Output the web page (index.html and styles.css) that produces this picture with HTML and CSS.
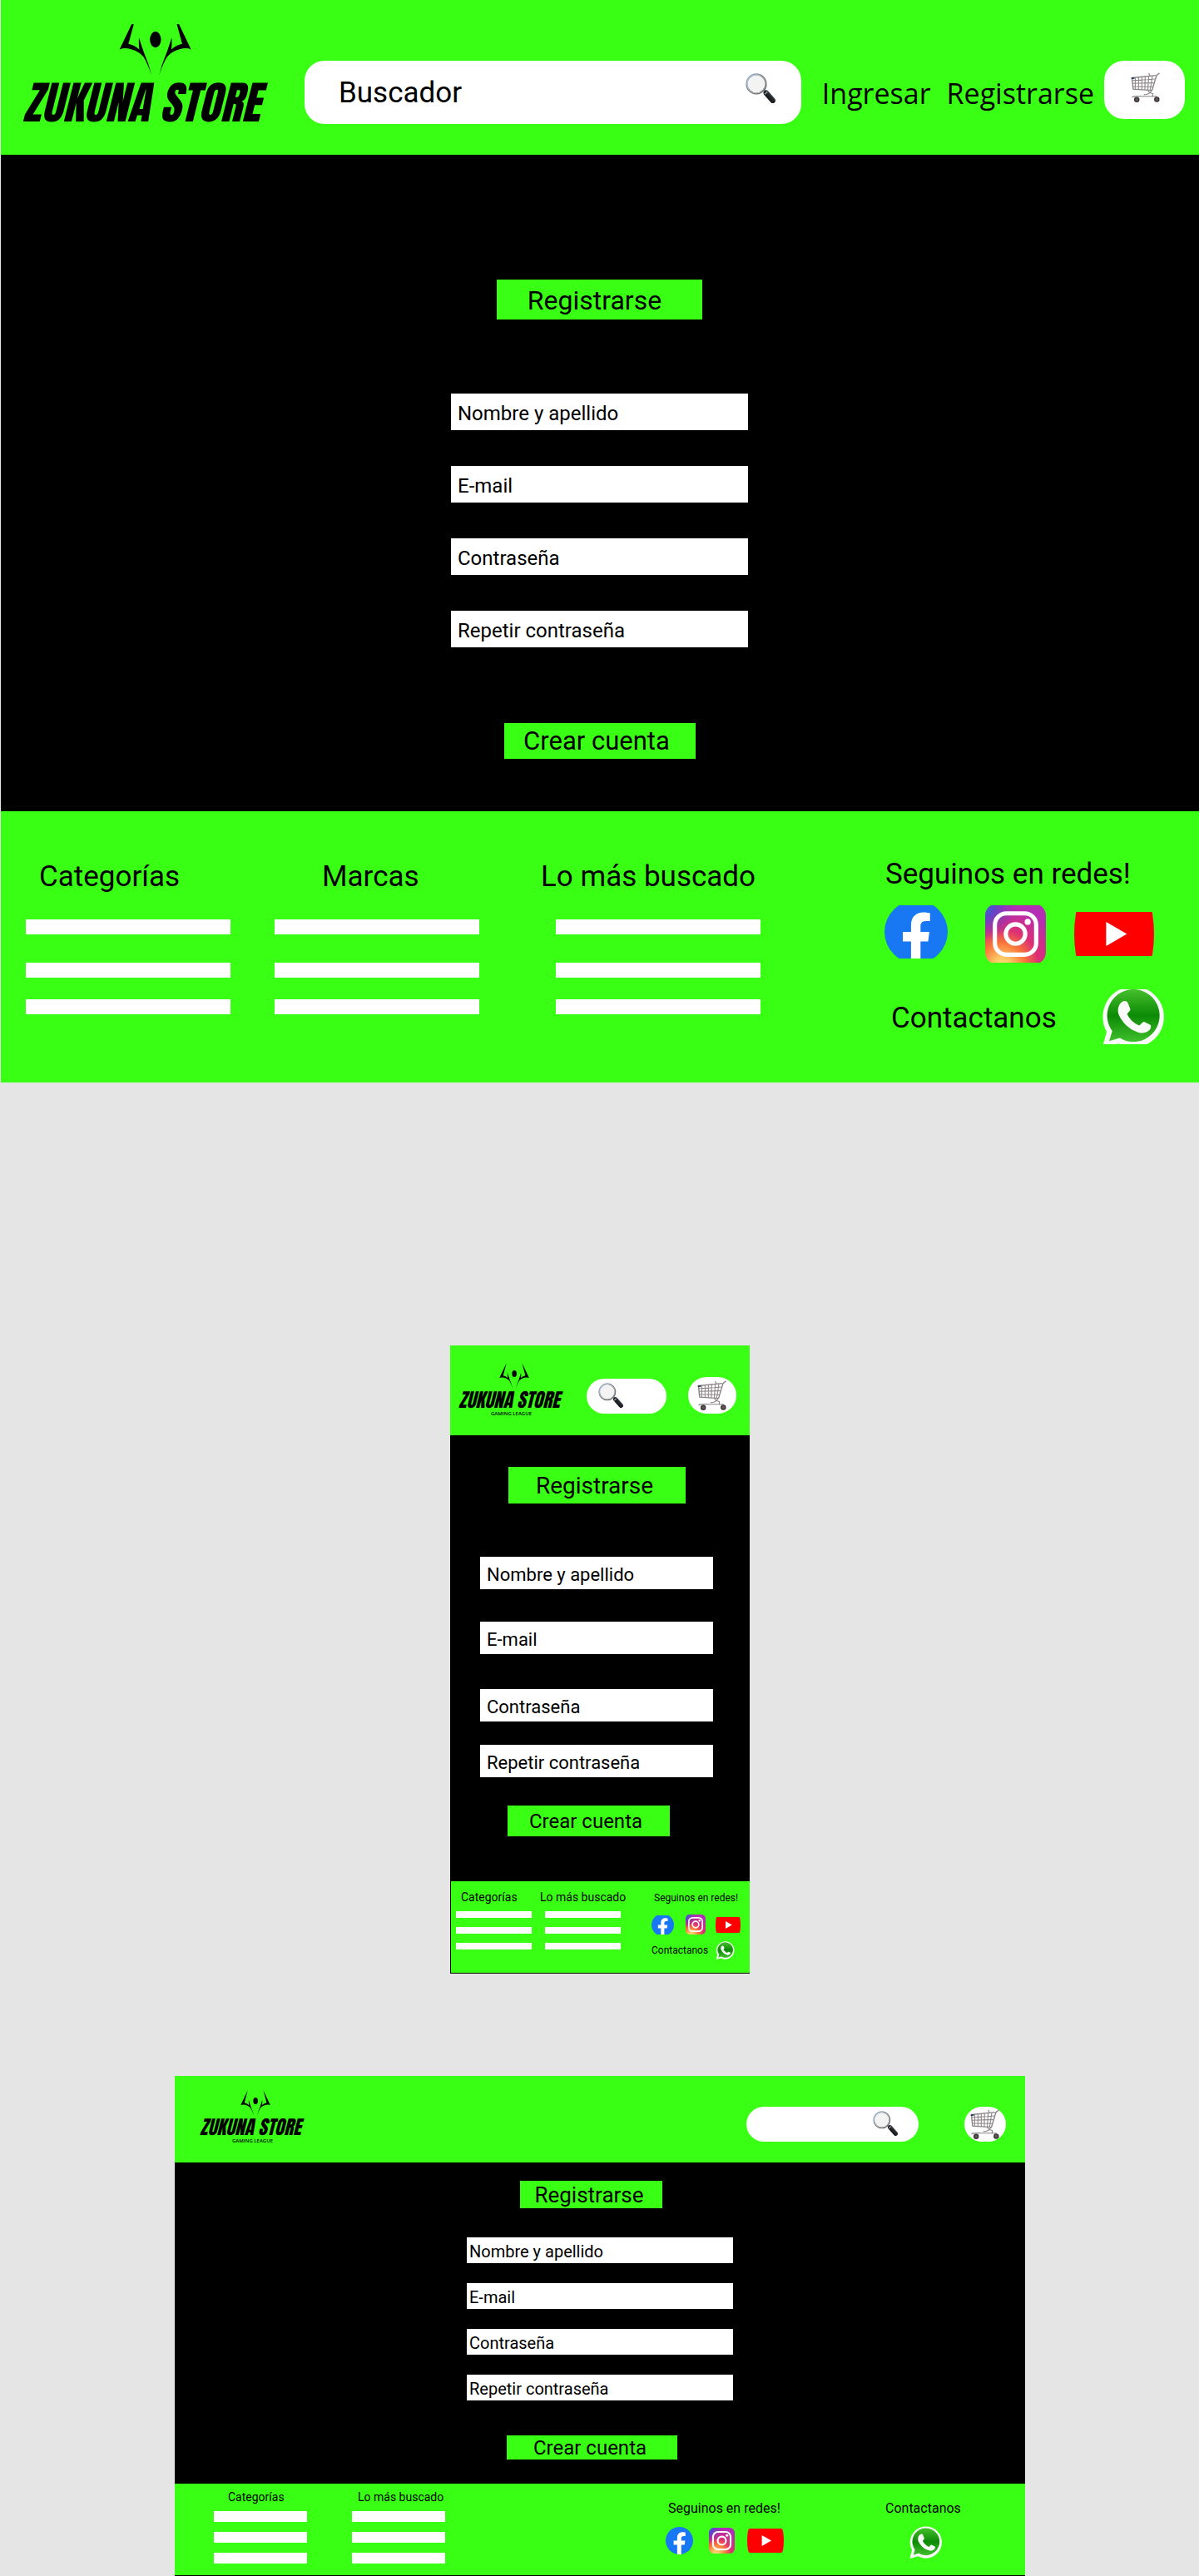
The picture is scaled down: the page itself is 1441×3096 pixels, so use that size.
FILE: index.html
```html
<!DOCTYPE html>
<html lang="es">
<head>
<meta charset="utf-8">
<meta name="viewport" content="width=device-width, initial-scale=1">
<title>Zukuna Store - Registrarse</title>
<link rel="stylesheet" href="styles.css">
</head>
<body>
<svg class="sprite" width="0" height="0" aria-hidden="true">
  <defs>
    <linearGradient id="lens-rim" x1="0" y1="0" x2="1" y2="1">
      <stop offset="0" stop-color="#8db4d8"/><stop offset=".5" stop-color="#77797c"/><stop offset="1" stop-color="#4a4c4f"/>
    </linearGradient>
    <linearGradient id="handle" x1="0" y1="1" x2="1" y2="0">
      <stop offset="0" stop-color="#0c0d0f"/><stop offset=".6" stop-color="#24282c"/><stop offset="1" stop-color="#66717a"/>
    </linearGradient>
    <radialGradient id="ig-warm" cx=".28" cy="1.02" r="1">
      <stop offset="0" stop-color="#ffdd77"/><stop offset=".14" stop-color="#fec564"/><stop offset=".38" stop-color="#f9743a"/><stop offset=".6" stop-color="#dd2f74"/><stop offset="1" stop-color="#b32db5"/>
    </radialGradient>
    <radialGradient id="ig-cool" cx="-.05" cy=".02" r=".6">
      <stop offset="0" stop-color="#3771e0"/><stop offset=".35" stop-color="#5a48c8"/><stop offset="1" stop-color="#8a30c0" stop-opacity="0"/>
    </radialGradient>
    <linearGradient id="wa-green" x1="0" y1="0" x2="0" y2="1">
      <stop offset="0" stop-color="#45bf2c"/><stop offset=".5" stop-color="#0d8a06"/><stop offset="1" stop-color="#3fc02c"/>
    </linearGradient>

    <g id="mark">
      <g id="wing">
        <path d="M491 50 L430 178 Q447 170 472 177 Q500 185 516 204 Q530 226 545 270 Q536 232 518 190 Q509 165 500 135 Q498 155 501 178 Q483 162 462 158 Z"/>
      </g>
      <use href="#wing" transform="matrix(-1 0 0 1 1117 0)"/>
      <ellipse cx="559" cy="142" rx="20" ry="29"/>
    </g>

    <g id="lens">
      <path d="M63 58 L70 65" stroke="#777" stroke-width="6"/>
      <path d="M69 66 L91 91" stroke="url(#handle)" stroke-width="18" stroke-linecap="round"/>
      <path d="M64 70 L73 62" stroke="#9aa3aa" stroke-width="4"/>
      <circle cx="36" cy="36" r="32" fill="#f3f3f3" stroke="url(#lens-rim)" stroke-width="6"/>
      <circle cx="36" cy="36" r="31" fill="none" stroke="#d5d8da" stroke-width="2"/>
    </g>

    <g id="cart" fill="none" stroke="#8b8587">
      <path d="M4 18 L83 10 M4 18 L8 56 L71 60 L86 10 L96 2" stroke-width="4"/>
      <path d="M5 27 L80 22 M6 37 L77 35 M7 47 L74 48 M15 17 V56 M26 16 V57 M37 15 V58 M48 14 L47 59 M60 13 L57 59 M72 12 L65 59" stroke-width="3"/>
      <path d="M60 2 L64 12 M57 60 Q62 70 74 71 L73 82 M70 60 Q62 76 44 74 M4 83 Q10 78 40 80 L86 80 L88 87" stroke-width="3"/>
      <path d="M2 17 H12 V22 H2 Z" fill="#27384a" stroke="none"/>
      <circle cx="20" cy="91" r="7" fill="#655859" stroke="#3d3536" stroke-width="4"/>
      <circle cx="87" cy="90" r="7" fill="#655859" stroke="#3d3536" stroke-width="4"/>
    </g>

    <g id="facebook">
      <circle cx="50" cy="50" r="50" fill="#1877f2"/>
      <path fill="#fff" d="M42 100 V65 H29 V50 H42 V39 C42 26 50 19 62 19 C66 19 70 20 72 20 V33 H65 C59 33 57 37 57 41 V50 H71 L69 65 H57 V100 Z"/>
    </g>
    <g id="instagram">
      <rect width="100" height="100" rx="20" fill="url(#ig-warm)"/>
      <rect width="100" height="100" rx="20" fill="url(#ig-cool)"/>
      <rect x="16" y="16" width="68" height="68" rx="19" fill="none" stroke="#fff" stroke-width="7"/>
      <circle cx="50" cy="50" r="16" fill="none" stroke="#fff" stroke-width="7"/>
      <circle cx="70" cy="30" r="5" fill="#fff"/>
    </g>
    <g id="youtube">
      <path fill="#f00" d="M10 1 Q50 -1 90 1 Q97 2 98 10 Q102 35 98 60 Q97 68 90 69 Q50 71 10 69 Q3 68 2 60 Q-2 35 2 10 Q3 2 10 1 Z"/>
      <path fill="#fff" d="M40 20 L66 35 L40 50 Z"/>
    </g>
    <g id="whatsapp">
      <path fill="#fafafa" d="M1 100 L8 74 A49 49 0 1 1 27 93 Z"/>
      <path fill="url(#wa-green)" d="M12 89 L17 73 A42 42 0 1 1 29 84 Z"/>
      <path fill="#fafafa" d="M35 25 C38 24 41 25 42 28 L46 38 C46 41 41 44 41 46 C45 54 51 60 60 64 C62 64 65 58 68 58 L78 63 C80 65 79 69 76 72 C70 77 63 77 56 74 C43 69 34 60 28 48 C24 39 27 28 35 25 Z"/>
    </g>
  </defs>
</svg>

<section class="frame desktop">
  <header class="top">
    <a class="brand" href="#">
      <svg class="brand-mark" viewBox="428 48 260 224" preserveAspectRatio="xMidYMax slice" aria-hidden="true"><use href="#mark"/></svg>
      <span class="brand-name">ZUKUNA STORE</span>
    </a>
    <div class="tools">
      <form class="search" role="search">
        <input type="search" placeholder="Buscador" aria-label="Buscador">
        <button type="button" aria-label="Buscar"><svg class="lens" viewBox="0 0 100 100" aria-hidden="true"><use href="#lens"/></svg></button>
      </form>
      <nav class="account">
        <a href="#">Ingresar</a>
        <a href="#">Registrarse</a>
      </nav>
      <button class="cart" type="button" aria-label="Carrito"><svg viewBox="0 0 100 100" aria-hidden="true"><use href="#cart"/></svg></button>
    </div>
  </header>
  <form class="signup">
    <h1 class="title">Registrarse</h1>
    <div class="fields">
      <input type="text" placeholder="Nombre y apellido" aria-label="Nombre y apellido">
      <input type="email" placeholder="E-mail" aria-label="E-mail">
      <input type="password" placeholder="Contraseña" aria-label="Contraseña">
      <input type="password" placeholder="Repetir contraseña" aria-label="Repetir contraseña">
    </div>
    <button class="submit" type="button">Crear cuenta</button>
  </form>
  <footer class="bottom">
    <section class="links categories"><h2>Categorías</h2><ul><li></li><li></li><li></li></ul></section>
    <section class="links brands"><h2>Marcas</h2><ul><li></li><li></li><li></li></ul></section>
    <section class="links popular"><h2>Lo más buscado</h2><ul><li></li><li></li><li></li></ul></section>
    <div class="reach">
      <section class="social">
        <h2>Seguinos en redes!</h2>
        <div class="networks">
          <a class="fb" href="#" aria-label="Facebook"><svg viewBox="0 0 100 100" preserveAspectRatio="xMidYMid slice" aria-hidden="true"><use href="#facebook"/></svg></a>
          <a class="ig" href="#" aria-label="Instagram"><svg viewBox="0 0 100 100" preserveAspectRatio="xMidYMid slice" aria-hidden="true"><use href="#instagram"/></svg></a>
          <a class="yt" href="#" aria-label="YouTube"><svg viewBox="0 0 100 70" preserveAspectRatio="xMidYMid slice" aria-hidden="true"><use href="#youtube"/></svg></a>
        </div>
      </section>
      <section class="contact">
        <h2>Contactanos</h2>
        <a class="wa" href="#" aria-label="WhatsApp"><svg viewBox="0 0 100 100" preserveAspectRatio="xMidYMid slice" aria-hidden="true"><use href="#whatsapp"/></svg></a>
      </section>
    </div>
  </footer>
</section>

<section class="frame mobile">
  <header class="top">
    <a class="brand" href="#">
      <svg class="brand-mark" viewBox="428 48 260 224" preserveAspectRatio="xMidYMax slice" aria-hidden="true"><use href="#mark"/></svg>
      <span class="brand-name">ZUKUNA STORE</span>
      <span class="brand-tag">GAMING LEAGUE</span>
    </a>
    <div class="tools">
      <form class="search" role="search">
        <button type="button" aria-label="Buscar"><svg class="lens" viewBox="0 0 100 100" aria-hidden="true"><use href="#lens"/></svg></button>
        <input type="search" aria-label="Buscador">
      </form>
      <button class="cart" type="button" aria-label="Carrito"><svg viewBox="0 0 100 100" aria-hidden="true"><use href="#cart"/></svg></button>
    </div>
  </header>
  <form class="signup">
    <h2 class="title">Registrarse</h2>
    <div class="fields">
      <input type="text" placeholder="Nombre y apellido" aria-label="Nombre y apellido">
      <input type="email" placeholder="E-mail" aria-label="E-mail">
      <input type="password" placeholder="Contraseña" aria-label="Contraseña">
      <input type="password" placeholder="Repetir contraseña" aria-label="Repetir contraseña">
    </div>
    <button class="submit" type="button">Crear cuenta</button>
  </form>
  <footer class="bottom">
    <section class="links categories"><h2>Categorías</h2><ul><li></li><li></li><li></li></ul></section>
    <section class="links popular"><h2>Lo más buscado</h2><ul><li></li><li></li><li></li></ul></section>
    <div class="reach">
      <section class="social">
        <h2>Seguinos en redes!</h2>
        <div class="networks">
          <a class="fb" href="#" aria-label="Facebook"><svg viewBox="0 0 100 100" preserveAspectRatio="xMidYMid slice" aria-hidden="true"><use href="#facebook"/></svg></a>
          <a class="ig" href="#" aria-label="Instagram"><svg viewBox="0 0 100 100" preserveAspectRatio="xMidYMid slice" aria-hidden="true"><use href="#instagram"/></svg></a>
          <a class="yt" href="#" aria-label="YouTube"><svg viewBox="0 0 100 70" preserveAspectRatio="xMidYMid slice" aria-hidden="true"><use href="#youtube"/></svg></a>
        </div>
      </section>
      <section class="contact">
        <h2>Contactanos</h2>
        <a class="wa" href="#" aria-label="WhatsApp"><svg viewBox="0 0 100 100" preserveAspectRatio="xMidYMid meet" aria-hidden="true"><use href="#whatsapp"/></svg></a>
      </section>
    </div>
  </footer>
</section>

<section class="frame landscape">
  <header class="top">
    <a class="brand" href="#">
      <svg class="brand-mark" viewBox="428 48 260 224" preserveAspectRatio="xMidYMax slice" aria-hidden="true"><use href="#mark"/></svg>
      <span class="brand-name">ZUKUNA STORE</span>
      <span class="brand-tag">GAMING LEAGUE</span>
    </a>
    <div class="tools">
      <form class="search" role="search">
        <input type="search" aria-label="Buscador">
        <button type="button" aria-label="Buscar"><svg class="lens" viewBox="0 0 100 100" aria-hidden="true"><use href="#lens"/></svg></button>
      </form>
      <button class="cart" type="button" aria-label="Carrito"><svg viewBox="0 0 100 100" aria-hidden="true"><use href="#cart"/></svg></button>
    </div>
  </header>
  <form class="signup">
    <h2 class="title">Registrarse</h2>
    <div class="fields">
      <input type="text" placeholder="Nombre y apellido" aria-label="Nombre y apellido">
      <input type="email" placeholder="E-mail" aria-label="E-mail">
      <input type="password" placeholder="Contraseña" aria-label="Contraseña">
      <input type="password" placeholder="Repetir contraseña" aria-label="Repetir contraseña">
    </div>
    <button class="submit" type="button">Crear cuenta</button>
  </form>
  <footer class="bottom">
    <section class="links categories"><h2>Categorías</h2><ul><li></li><li></li><li></li></ul></section>
    <section class="links popular"><h2>Lo más buscado</h2><ul><li></li><li></li><li></li></ul></section>
    <div class="reach">
      <section class="social">
        <h2>Seguinos en redes!</h2>
        <div class="networks">
          <a class="fb" href="#" aria-label="Facebook"><svg viewBox="0 0 100 100" preserveAspectRatio="xMidYMid meet" aria-hidden="true"><use href="#facebook"/></svg></a>
          <a class="ig" href="#" aria-label="Instagram"><svg viewBox="0 0 100 100" preserveAspectRatio="xMidYMid slice" aria-hidden="true"><use href="#instagram"/></svg></a>
          <a class="yt" href="#" aria-label="YouTube"><svg viewBox="0 0 100 70" preserveAspectRatio="xMidYMid slice" aria-hidden="true"><use href="#youtube"/></svg></a>
        </div>
      </section>
      <section class="contact">
        <h2>Contactanos</h2>
        <a class="wa" href="#" aria-label="WhatsApp"><svg viewBox="0 0 100 100" preserveAspectRatio="xMidYMid meet" aria-hidden="true"><use href="#whatsapp"/></svg></a>
      </section>
    </div>
  </footer>
</section>
</body>
</html>
```

FILE: styles.css
```css
:root {
  --green: #39ff14;
  --canvas: #e5e5e5;
}

* { box-sizing: border-box; }

body {
  margin: 0;
  padding-left: 1px;
  background: var(--canvas);
  color: #000;
  font-family: Roboto, "Liberation Sans", sans-serif;
}

h1, h2 { margin: 0; font-weight: 400; }
ul { margin: 0; padding: 0; list-style: none; }
a { color: inherit; text-decoration: none; }
svg { display: block; }
button, input { margin: 0; border: 0; padding: 0; border-radius: 0; font: inherit; color: inherit; }
button { background: none; cursor: pointer; }
input { min-width: 0; background: none; outline: 0; appearance: none; }
input::placeholder { color: #000; opacity: 1; }
.sprite { position: absolute; }

/* Shared parts */
.frame { margin: 0 auto; background: #000; }

.top { display: flex; align-items: flex-start; background: var(--green); }
.brand { display: flex; flex-direction: column; flex: none; }
.brand-name {
  font-family: Anton, "Roboto Condensed", "Liberation Sans Narrow", "Liberation Sans", sans-serif;
  font-weight: 400;
  font-style: italic;
  white-space: nowrap;
}
.brand-tag { font-family: "Open Sans", sans-serif; font-weight: 600; font-size: 6px; line-height: 6px; }
.tools { display: flex; align-items: flex-start; }
.search { display: flex; background: #fff; overflow: hidden; }
.search input { flex: 1; width: 0; }
.cart { display: flex; justify-content: center; flex: none; background: #fff; }

.signup { display: flex; flex-direction: column; }
.title, .submit { display: flex; align-items: center; justify-content: center; background: var(--green); }
.fields { display: flex; flex-direction: column; }
.fields input { width: 100%; background: #fff; }

.bottom { display: grid; background: var(--green); }
.links li { background: #fff; }
.reach { display: flex; flex-direction: column; }
.networks { display: flex; align-items: center; }
.networks svg, .contact svg { width: 100%; height: 100%; }

/* Desktop */
.desktop .top { padding: 29px 17px 31px 26px; }
.desktop .brand { width: 339px; }
.desktop .brand-mark { width: 87px; height: 62px; margin-left: 116px; }
.desktop .brand-name { font-size: 54px; line-height: 64px; }
.desktop .tools { flex: 1; margin-top: 44px; }
.desktop .search { flex: 1; height: 76px; border-radius: 24px; padding: 0 31px 0 41px; font-size: 35px; }
.desktop .search button { padding-bottom: 11px; }
.desktop .lens { width: 36px; height: 36px; }
.desktop .account { display: flex; gap: 19px; padding: 1px 12px 0 25px; font: 34px/76px "Open Sans", sans-serif; }
.desktop .cart { width: 97px; height: 70px; border-radius: 24px; padding: 14px 0 0 2px; }
.desktop .cart svg { width: 36px; height: 36px; }

.desktop .signup { align-items: center; padding: 150px 21px 63px 20px; }
.desktop .title { width: 247px; height: 48px; padding: 1px 12px 0 0; font-size: 32px; }
.desktop .fields { width: 100%; max-width: 357px; gap: 43px; margin: 89px 0 91px; font-size: 24px; }
.desktop .fields input { height: 44px; padding: 3px 8px 0; }
.desktop .submit { width: 230px; height: 43px; padding-right: 7px; font-size: 31px; }

.desktop .bottom { grid-template-columns: 299fr 319fr 414fr 378fr; padding: 58px 0 46px 30px; }
.desktop .bottom h2 { font-size: 35px; line-height: 42px; white-space: nowrap; }
.desktop .links ul { width: 246px; margin-top: 30px; }
.desktop .links li { height: 18px; }
.desktop .links li:nth-child(2) { margin: 34px 0 26px; }
.desktop .categories h2 { padding-left: 16px; }
.desktop .brands h2 { padding-left: 57px; }
.desktop .popular h2 { padding-left: 1px; }
.desktop .popular ul { margin-left: 19px; }
.desktop .reach { gap: 32px; margin-top: -3px; }
.desktop .social h2 { padding-left: 1px; }
.desktop .networks { margin-top: 16px; }
.desktop .fb { width: 76px; height: 64px; align-self: flex-start; }
.desktop .ig { width: 73px; height: 69px; margin: 0 34px 0 45px; }
.desktop .yt { width: 96px; height: 53px; }
.desktop .contact { display: flex; align-items: center; gap: 54px; padding-left: 8px; }
.desktop .contact h2 { padding-top: 3px; }
.desktop .wa { width: 75px; height: 66px; }

/* Mobile */
.mobile { max-width: 360px; margin-top: 316px; }
.mobile .top { padding: 21px 16px 23px 10px; }
.mobile .brand, .landscape .brand { width: 127px; }
.mobile .brand-mark, .landscape .brand-mark { width: 36px; height: 31px; margin-left: 49px; }
.mobile .brand-name, .landscape .brand-name { font-size: 23px; line-height: 27px; }
.mobile .brand-tag, .landscape .brand-tag { margin-left: 39px; }
.mobile .tools { flex: 1; align-items: flex-end; justify-content: space-between; margin: 17px 0 0 27px; }
.mobile .search { width: 96px; height: 42px; border-radius: 21px; padding: 0 14px; }
.mobile .search button { padding-bottom: 2px; }
.mobile .lens, .landscape .lens { width: 30px; height: 30px; }
.mobile .cart { align-items: center; width: 58px; height: 44px; border-radius: 22px; }
.mobile .cart svg, .landscape .cart svg { width: 36px; height: 36px; }

.mobile .signup { padding: 38px 44px 54px 36px; }
.mobile .title { width: 213px; height: 44px; margin-left: 34px; padding-right: 6px; font-size: 28px; }
.mobile .fields { margin: 64px 0 34px; font-size: 22px; }
.mobile .fields input { height: 39px; padding: 4px 8px 0; }
.mobile .fields input:nth-child(2) { margin: 39px 0 42px; }
.mobile .fields input:nth-child(4) { margin-top: 28px; }
.mobile .submit { width: 195px; height: 37px; margin-left: 33px; padding-right: 7px; font-size: 24px; }

.mobile .bottom { grid-template-columns: 100px 135px 1fr; padding: 11px 0 16px 6px; border: solid #000; border-width: 0 0 1px 1px; }
.mobile .links h2 { font-size: 14px; line-height: 16px; white-space: nowrap; }
.mobile .links ul { display: grid; gap: 11px; width: 91px; margin-top: 9px; }
.mobile .links li { height: 8px; }
.mobile .categories h2 { padding-left: 6px; }
.mobile .popular h2 { padding-left: 1px; }
.mobile .popular ul { margin-left: 7px; }
.mobile .reach { gap: 8px; }
.mobile .reach h2 { font-size: 12px; line-height: 18px; white-space: nowrap; }
.mobile .social h2 { padding-left: 3px; }
.mobile .networks { margin-top: 11px; }
.mobile .fb { width: 27px; height: 23px; }
.mobile .ig { width: 24px; height: 24px; margin: 0 12px 0 14px; }
.mobile .yt { width: 30px; height: 19px; }
.mobile .contact { display: flex; align-items: center; gap: 9px; }
.mobile .wa { width: 23px; height: 22px; }

/* Landscape */
.landscape { max-width: 1022px; margin-top: 123px; }
.landscape .top { justify-content: space-between; padding: 17px 23px 23px 30px; }
.landscape .tools { gap: 55px; margin-top: 20px; }
.landscape .search { width: 207px; height: 42px; border-radius: 21px; padding: 0 25px; }
.landscape .search button { padding-bottom: 2px; }
.landscape .cart { width: 50px; height: 42px; border-radius: 21px; padding-top: 3px; }

.landscape .signup { align-items: center; padding: 22px 20px 29px; }
.landscape .title { width: 171px; height: 33px; margin-right: 22px; padding-right: 4px; font-size: 26px; }
.landscape .fields { width: 100%; max-width: 320px; gap: 24px; margin: 35px 0 42px; font-size: 20px; }
.landscape .fields input { height: 31px; padding: 2px 3px 0; }
.landscape .submit { width: 205px; height: 29px; margin-right: 20px; padding-right: 4px; font-size: 24px; }

.landscape .bottom { grid-template-columns: 166fr 377fr 432fr; padding: 8px 0 14px 47px; border-bottom: 1px solid #000; }
.landscape .links h2 { font-size: 14px; line-height: 16px; }
.landscape .links ul { display: grid; gap: 12px; width: 112px; margin-top: 9px; }
.landscape .links li { height: 13px; }
.landscape .categories h2 { padding-left: 17px; }
.landscape .popular h2 { padding-left: 7px; }
.landscape .reach { flex-direction: row; gap: 122px; padding-top: 12px; }
.landscape .reach h2 { font-size: 16px; line-height: 20px; white-space: nowrap; }
.landscape .social h2 { padding-left: 3px; }
.landscape .networks { margin-top: 12px; }
.landscape .fb { width: 33px; height: 33px; }
.landscape .ig { width: 31px; height: 31px; margin: 0 15px 0 19px; }
.landscape .yt { width: 44px; height: 29px; }
.landscape .wa { display: block; width: 39px; height: 39px; margin: 11px 0 0 29px; }
```
